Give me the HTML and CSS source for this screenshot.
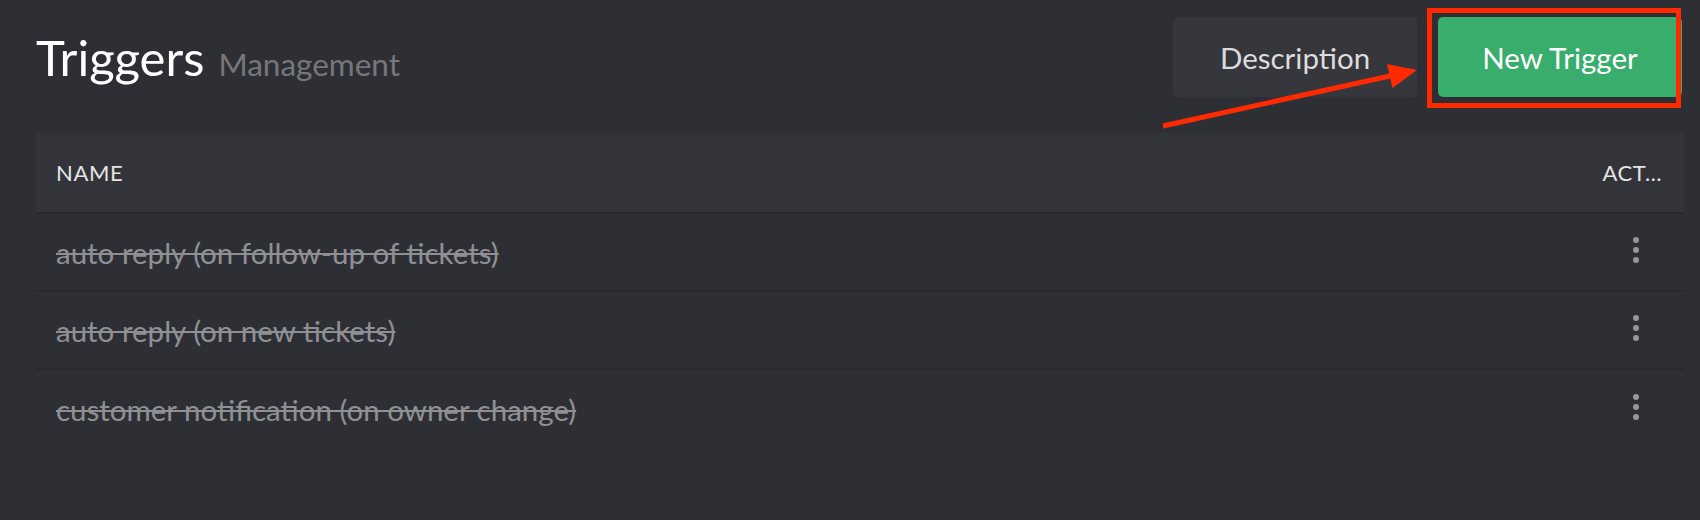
FILE: index.html
```html
<!DOCTYPE html>
<html lang="en">
<head>
<meta charset="utf-8">
<title>Triggers</title>
<link rel="stylesheet" href="styles.css">
</head>
<body>
<div class="page">
  <header class="page-header">
    <div class="title-group">
      <h1 class="title">Triggers</h1>
      <span class="subtitle">Management</span>
    </div>
    <div class="actions">
      <button class="btn btn-secondary">Description</button>
      <button class="btn btn-primary">New Trigger<span class="highlight-box"></span></button>
    </div>
  </header>

  <svg class="annotation-arrow" width="270" height="80" viewBox="0 0 270 80" aria-hidden="true">
    <line x1="8" y1="71" x2="236" y2="20.7" stroke="#ff2a00" stroke-width="5" stroke-linecap="butt"/>
    <polygon points="262,15 232,9 237.5,33" fill="#ff2a00"/>
  </svg>

  <div class="table">
    <div class="row head">
      <div class="cell name">Name</div>
      <div class="cell act">ACT…</div>
    </div>
    <div class="row">
      <div class="cell name inactive">auto reply (on follow-up of tickets)</div>
      <div class="cell act"><span class="kebab"><i></i><i></i><i></i></span></div>
    </div>
    <div class="row">
      <div class="cell name inactive">auto reply (on new tickets)</div>
      <div class="cell act"><span class="kebab"><i></i><i></i><i></i></span></div>
    </div>
    <div class="row">
      <div class="cell name inactive">customer notification (on owner change)</div>
      <div class="cell act"><span class="kebab"><i></i><i></i><i></i></span></div>
    </div>
  </div>
</div>
</body>
</html>
```

FILE: styles.css
```css
* { box-sizing: border-box; }

html, body {
  margin: 0;
  height: 100%;
  background: #2e2f34;
}

body {
  font-family: Lato, "Open Sans", sans-serif;
  color: #e2e2e4;
}

.page {
  position: relative;
  padding: 17px 16px 0 36px;
  min-height: 100%;
}

.page-header {
  display: flex;
  align-items: center;
  justify-content: space-between;
  height: 80px;
}

.title-group {
  display: flex;
  align-items: baseline;
  line-height: 80px;
  padding-top: 6px;
}

.title {
  margin: 0;
  font-size: 49px;
  font-weight: 400;
  color: #ffffff;
}

.subtitle {
  margin-left: 14px;
  font-size: 31.5px;
  color: #76777b;
}

.actions {
  display: flex;
  gap: 21px;
  margin-right: 2px;
}

.btn {
  position: relative;
  width: 244px;
  height: 80px;
  border: 0;
  border-radius: 5px;
  font-family: inherit;
  font-size: 29.5px;
  padding: 0;
  cursor: pointer;
}

.btn-secondary {
  background: #36373c;
  color: #dcdcde;
}

.btn-primary {
  background: #38ad6c;
  color: #ffffff;
}

.highlight-box {
  position: absolute;
  top: -9px;
  left: -11px;
  right: 1px;
  bottom: -11px;
  border: 5px solid #ff2a00;
  pointer-events: none;
}

.annotation-arrow {
  position: absolute;
  left: 1155px;
  top: 55px;
}

.table {
  margin-top: 36px;
}

.row {
  display: flex;
  align-items: center;
  height: 78px;
  border-bottom: 2px solid #28292d;
}

.row:last-child {
  border-bottom: 0;
}

.row.head {
  height: 81px;
  background: #333439;
  border-bottom: 2px solid #28292d;
}

.cell.name {
  flex: 1;
  padding-left: 20px;
}

.head .cell {
  font-size: 22px;
  text-transform: uppercase;
  letter-spacing: 0.6px;
  color: #e4e4e6;
}

.cell.act {
  display: flex;
  justify-content: flex-end;
  align-items: center;
  width: 100px;
  padding-right: 22px;
}

.inactive {
  font-size: 29.5px;
  color: #8e9094;
  text-decoration: line-through;
  text-decoration-thickness: 2px;
}

.kebab {
  display: flex;
  flex-direction: column;
  gap: 4px;
  margin-right: 23px;
  margin-bottom: 4px;
}

.kebab i {
  display: block;
  width: 6px;
  height: 6px;
  border-radius: 50%;
  background: #96979b;
}
```
